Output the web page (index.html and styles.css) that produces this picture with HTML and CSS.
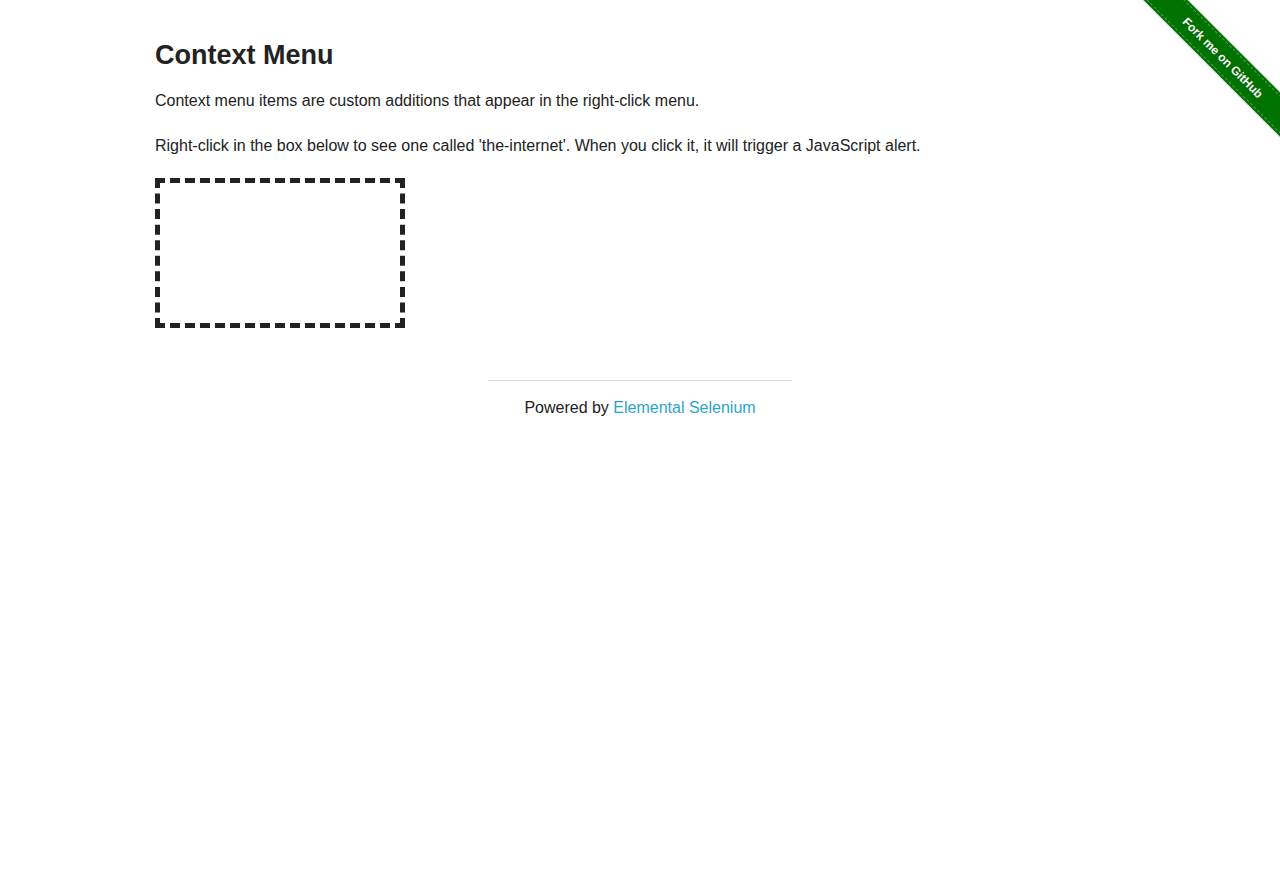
FILE: index.html
```html
<!DOCTYPE html>
<html>
<head>
<meta charset="utf-8">
<title>The Internet</title>
<link rel="stylesheet" href="styles.css">
</head>
<body>
<a class="fork" href="#">
  <span class="ribbon"><span class="ribbon-text">Fork me on GitHub</span></span>
</a>
<div class="page">
  <div class="content">
    <h3 class="title">Context Menu</h3>
    <p class="para para-first">Context menu items are custom additions that appear in the right-click menu.</p>
    <p class="para">Right-click in the box below to see one called 'the-internet'. When you click it, it will trigger a JavaScript alert.</p>
    <div class="hot-spot"></div>
  </div>
  <div class="footer">
    <div class="footer-col">
      <hr class="rule">
      <div class="powered">Powered by <a class="link" href="#">Elemental Selenium</a></div>
    </div>
  </div>
</div>
</body>
</html>
```
FILE: styles.css
```css
html, body {
  margin: 0;
  padding: 0;
  background: #fff;
}
body {
  font-family: "Liberation Sans", Arial, Helvetica, sans-serif;
  color: #222;
  font-size: 16px;
}
.page {
  width: 1000px;
  margin: 0 auto;
  display: flow-root;
}
.content {
  padding: 0 15px;
  display: flow-root;
}
.title {
  margin: 36px 0 14px;
  font-size: 27px;
  line-height: 38px;
  font-weight: bold;
  color: #222;
}
.para {
  margin: 0 0 20px;
  line-height: 25.6px;
}
.para-first {
  margin-bottom: 19px;
}
.hot-spot {
  box-sizing: border-box;
  width: 250px;
  height: 150px;
  border: 5px dashed #222;
}
.footer {
  display: flex;
  justify-content: center;
  margin-top: 52px;
}
.footer-col {
  width: 333.33px;
  padding: 0 15px;
  box-sizing: border-box;
}
.rule {
  margin: 0 0 14px;
  border: 0;
  border-top: 1px solid #ddd;
  height: 0;
}
.powered {
  text-align: center;
  line-height: 25.6px;
}
.link {
  color: #2ba6cb;
  text-decoration: none;
}
.fork {
  position: absolute;
  top: 0;
  right: 0;
  width: 149px;
  height: 149px;
  overflow: hidden;
  text-decoration: none;
}
.ribbon {
  position: absolute;
  left: -28.5px;
  top: 42px;
  width: 240px;
  height: 31px;
  background: #007200;
  transform: rotate(45deg);
  box-shadow: 0 0 2px rgba(0,0,0,0.35);
  display: flex;
  align-items: center;
  justify-content: center;
}
.ribbon::before, .ribbon::after {
  content: "";
  position: absolute;
  left: 0;
  right: 0;
  height: 0;
  border-top: 1px dashed rgba(255,255,255,0.3);
}
.ribbon::before { top: 2px; }
.ribbon::after { bottom: 2px; }
.ribbon-text {
  color: #fff;
  font-family: "Liberation Sans", Arial, sans-serif;
  font-weight: bold;
  font-size: 12px;
  text-shadow: 0 0 1px rgba(0,0,0,0.4);
  line-height: 1;
}
```
